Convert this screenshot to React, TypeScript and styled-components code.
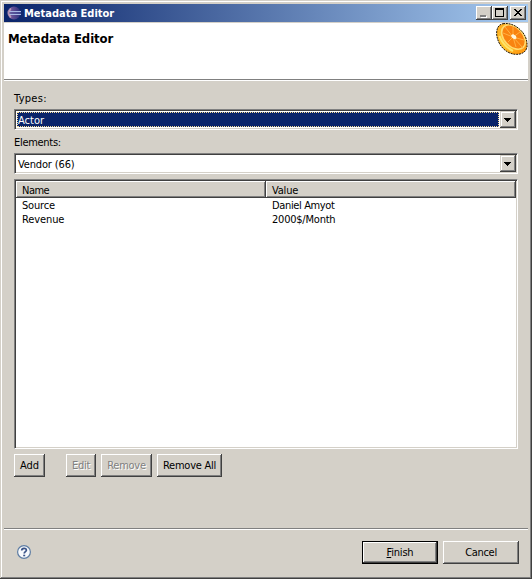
import React from 'react';
import styled, { createGlobalStyle, css } from 'styled-components';

const Global = createGlobalStyle`
  * { box-sizing: border-box; }
  body { margin: 0; background: #d4d0c8; }
`;

const Win = styled.div`
  width: 532px;
  height: 579px;
  display: flex;
  flex-direction: column;
  padding: 2px;
  background: #d4d0c8;
  color: #000;
  font: 11px/14px "DejaVu Sans Condensed", "DejaVu Sans", sans-serif;
  font-stretch: condensed;
  white-space: nowrap;
  box-shadow: inset -1px -1px #404040, inset 1px 1px #d4d0c8, inset -2px -2px #808080, inset 2px 2px #fff;
`;
const TitleBar = styled.header`
  display: flex;
  align-items: center;
  height: 18px;
  margin: 2px 2px 1px;
  padding: 0 2px 0 3px;
  background: linear-gradient(90deg, #0a246a, #a6caf0);
  color: #fff;
  font-weight: bold;
`;
const Title = styled.span`
  flex: 1;
  margin-left: 3px;
  padding-top: 2px;
`;
const Text = styled.span<{ $ls?: number }>`
  letter-spacing: ${(p) => p.$ls ?? 0}px;
`;
const raised = css`
  background: #d4d0c8;
  box-shadow: inset -1px -1px #404040, inset 1px 1px #fff, inset -2px -2px #808080;
`;
const CaptionButton = styled.button<{ $gap?: boolean }>`
  ${raised}
  display: block;
  width: 16px;
  height: 14px;
  padding: 0;
  border: 0;
  margin-left: ${(p) => (p.$gap ? 2 : 0)}px;
  svg { display: block; }
`;
const Banner = styled.section`
  display: flex;
  justify-content: space-between;
  height: 58px;
  margin: 0 2px;
  padding-left: 4px;
  background: #fff;
  border-bottom: 1px solid #fff;
  box-shadow: inset 0 -1px #808080;
`;
const BannerTitle = styled.h1`
  margin: 8px 0 0;
  font-size: 13px;
  line-height: 16px;
`;
const Body = styled.main`
  display: flex;
  flex-direction: column;
  height: 447px;
  padding: 10px 12px 0;
`;
const Label = styled.label`
  height: 18px;
  padding-top: 1px;
`;
const sunken = css`
  border: 1px solid;
  border-color: #808080 #fff #fff #808080;
  box-shadow: inset 1px 1px #404040, inset -1px -1px #d4d0c8;
  padding: 1px;
  background: #fff;
`;
const Combo = styled.div`
  ${sunken}
  display: flex;
  width: 504px;
  height: 21px;
  margin-bottom: 5px;
`;
const ComboValue = styled.div<{ $focused?: boolean }>`
  flex: 1;
  margin: 1px;
  padding-left: ${(p) => (p.$focused ? 0 : 1)}px;
  line-height: ${(p) => (p.$focused ? 15 : 17)}px;
  ${(p) => p.$focused && css`
    background: #0a246a;
    color: #fff;
    border: 1px dotted #f5db95;
  `}
`;
const ComboArrow = styled.button`
  ${raised}
  width: 16px;
  height: 17px;
  padding: 0;
  border: 0;
  box-shadow: inset -1px -1px #404040, inset 1px 1px #d4d0c8, inset -2px -2px #808080, inset 2px 2px #fff;
  svg { display: block; }
`;
const Table = styled.div`
  ${sunken}
  width: 504px;
  height: 270px;
`;
const Row = styled.div`
  display: grid;
  grid-template-columns: 250px 250px;
  height: 14px;
`;
const HeadRow = styled(Row)`
  height: 17px;
`;
const HeadCell = styled.div`
  ${raised}
  padding: 3px 0 0 6px;
`;
const Cell = styled.div`
  padding: 1px 0 0 6px;
`;
const Actions = styled.div`
  display: flex;
  gap: 5px;
  margin-top: 5px;
`;
const Button = styled.button<{ $w: number; $after?: number; $primary?: boolean }>`
  ${raised}
  width: ${(p) => p.$w}px;
  height: 23px;
  margin: 0 ${(p) => p.$after ?? 0}px 0 0;
  padding: 1px 0 0;
  border: ${(p) => (p.$primary ? '1px solid #000' : '0')};
  color: #000;
  font: inherit;
  &:disabled { color: #808080; text-shadow: 1px 1px #fff; }
`;
const Footer = styled.footer`
  display: flex;
  align-items: flex-start;
  height: 49px;
  margin: 0 2px;
  padding: 12px 9px 0 13px;
  border-top: 1px solid #808080;
  box-shadow: inset 0 1px #fff;
  gap: 5px;
`;
const HelpSlot = styled.div`
  flex: 1;
  padding-top: 4px;
  svg { display: block; }
`;

const EclipseIcon = () => (
  <svg width="14" height="14" viewBox="0 0 14 14">
    <defs>
      <linearGradient id="ecl" x1="0" x2="1">
        <stop offset="0" stopColor="#b895b5" />
        <stop offset=".3" stopColor="#6c5598" />
        <stop offset="1" stopColor="#2c2f7c" />
      </linearGradient>
    </defs>
    <circle cx="7" cy="7" r="6.5" fill="url(#ecl)" />
    <path d="M4 2.5A6.6 6.6 0 0 0 4 11.5" fill="none" stroke="#d5b5c6" strokeWidth="1.5" opacity=".7" />
    <path d="M3 5.5h11M3 8.5h11" stroke="#a9b9e4" />
    <path d="M2 7h12" stroke="#50599f" />
  </svg>
);

const peelPath = 'M7 .7C14-.3 20 2.500 25 7.500C30 12.500 31.500 18.500 31 24C30 29.500 25 31.800 19 31.300C10 30.500 2 22.500.7 12C.3 6 2 1.700 7 .7Z';

const OrangeIcon = () => (
  <svg width="32" height="32" viewBox="0 0 32 32">
    <defs>
      <linearGradient id="peel" x1="0" y1="0" x2=".7" y2="1">
        <stop offset="0" stopColor="#ffa91e" />
        <stop offset=".6" stopColor="#ffc62c" />
        <stop offset="1" stopColor="#ff9b12" />
      </linearGradient>
      <clipPath id="fruit"><path d={peelPath} /></clipPath>
    </defs>
    <g clipPath="url(#fruit)">
      <path d={peelPath} fill="url(#peel)" />
      <path d="M3.500 13Q7 23 17 28" stroke="#ffe36a" strokeWidth="2" fill="none" />
      <ellipse cx="17.500" cy="14" rx="15" ry="10.200" transform="rotate(47 17.500 14)" fill="#ffda70" />
      <ellipse cx="17.500" cy="14" rx="13.300" ry="8.600" transform="rotate(47 17.500 14)" fill="#f98310" />
      <path d="M17 14L9 4M17 14L17 4M17 14L24 9M17 14L28 17M17 14L27 25M17 14L20 24M17 14L12 19M17 14L7 10" stroke="#ffb548" strokeWidth=".9" />
      <path d="M15 12.500l2-1.500 3 2 .5 2.500-2 .7-2.500-1.500z" fill="#fff6dc" />
    </g>
    <path d={peelPath} fill="none" stroke="#211500" strokeWidth="1" strokeDasharray="2 .8" />
  </svg>
);

const HelpIcon = () => (
  <svg width="15" height="15" viewBox="0 0 15 15">
    <circle cx="7" cy="7" r="6.400" fill="#f7f9fc" stroke="#5e7da3" strokeWidth="1.200" />
    <path d="M4.700 5.600C4.700 2.700 9.400 2.700 9.400 5.200C9.400 6.700 7.200 6.700 7.200 8.600" fill="none" stroke="#3b5488" strokeWidth="1.700" />
    <path d="M6.200 9.700h2v1.600h-2z" fill="#3b5488" />
  </svg>
);

const Arrow = () => (
  <svg width="16" height="17" shapeRendering="crispEdges">
    <path d="M4 7h7v1H4zM5 8h5v1H5zM6 9h3v1H6zM7 10h1v1H7z" />
  </svg>
);

const rows = [
  { name: 'Source', value: 'Daniel Amyot', nameSpacing: -0.2, valueSpacing: -0.36 },
  { name: 'Revenue', value: '2000$/Month', nameSpacing: -0.1, valueSpacing: -0.22 },
];

export default function App() {
  return (
    <Win>
      <Global />
      <TitleBar>
        <EclipseIcon />
        <Title><Text>Metadata Editor</Text></Title>
        <CaptionButton aria-label="Minimize">
          <svg width="16" height="14" shapeRendering="crispEdges"><path d="M5 10h6v2H5z" fill="#fff" /><path d="M4 9h6v2H4z" fill="#808080" /></svg>
        </CaptionButton>
        <CaptionButton aria-label="Maximize">
          <svg width="16" height="14" shapeRendering="crispEdges"><path fillRule="evenodd" d="M3 2h9v9H3zM4 4v6h7V4z" /></svg>
        </CaptionButton>
        <CaptionButton $gap aria-label="Close">
          <svg width="16" height="14" shapeRendering="crispEdges">
            <path d="M4 3h2v1H4zM10 3h2v1h-2zM5 4h2v1H5zM9 4h2v1H9zM6 5h4v1H6zM7 6h2v1H7zM6 7h4v1H6zM5 8h2v1H5zM9 8h2v1H9zM4 9h2v1H4zM10 9h2v1h-2z" />
          </svg>
        </CaptionButton>
      </TitleBar>
      <Banner>
        <BannerTitle><Text $ls={-0.1}>Metadata Editor</Text></BannerTitle>
        <OrangeIcon />
      </Banner>
      <Body>
        <Label><Text $ls={0.3}>Types:</Text></Label>
        <Combo>
          <ComboValue $focused><Text>Actor</Text></ComboValue>
          <ComboArrow aria-label="Open types"><Arrow /></ComboArrow>
        </Combo>
        <Label><Text $ls={-0.3}>Elements:</Text></Label>
        <Combo>
          <ComboValue><Text $ls={-0.15}>Vendor (66)</Text></ComboValue>
          <ComboArrow aria-label="Open elements"><Arrow /></ComboArrow>
        </Combo>
        <Table>
          <HeadRow>
            <HeadCell><Text $ls={-0.5}>Name</Text></HeadCell>
            <HeadCell><Text $ls={-0.2}>Value</Text></HeadCell>
          </HeadRow>
          {rows.map((r) => (
            <Row key={r.name}>
              <Cell><Text $ls={r.nameSpacing}>{r.name}</Text></Cell>
              <Cell><Text $ls={r.valueSpacing}>{r.value}</Text></Cell>
            </Row>
          ))}
        </Table>
        <Actions>
          <Button $w={31} $after={16}><Text>Add</Text></Button>
          <Button $w={30} disabled><Text $ls={-0.3}>Edit</Text></Button>
          <Button $w={51} disabled><Text $ls={-0.25}>Remove</Text></Button>
          <Button $w={65}><Text $ls={-0.25}>Remove All</Text></Button>
        </Actions>
      </Body>
      <Footer>
        <HelpSlot><HelpIcon /></HelpSlot>
        <Button $w={76} $primary><Text $ls={-0.2}><u>F</u>inish</Text></Button>
        <Button $w={76}><Text $ls={-0.3}>Cancel</Text></Button>
      </Footer>
    </Win>
  );
}
